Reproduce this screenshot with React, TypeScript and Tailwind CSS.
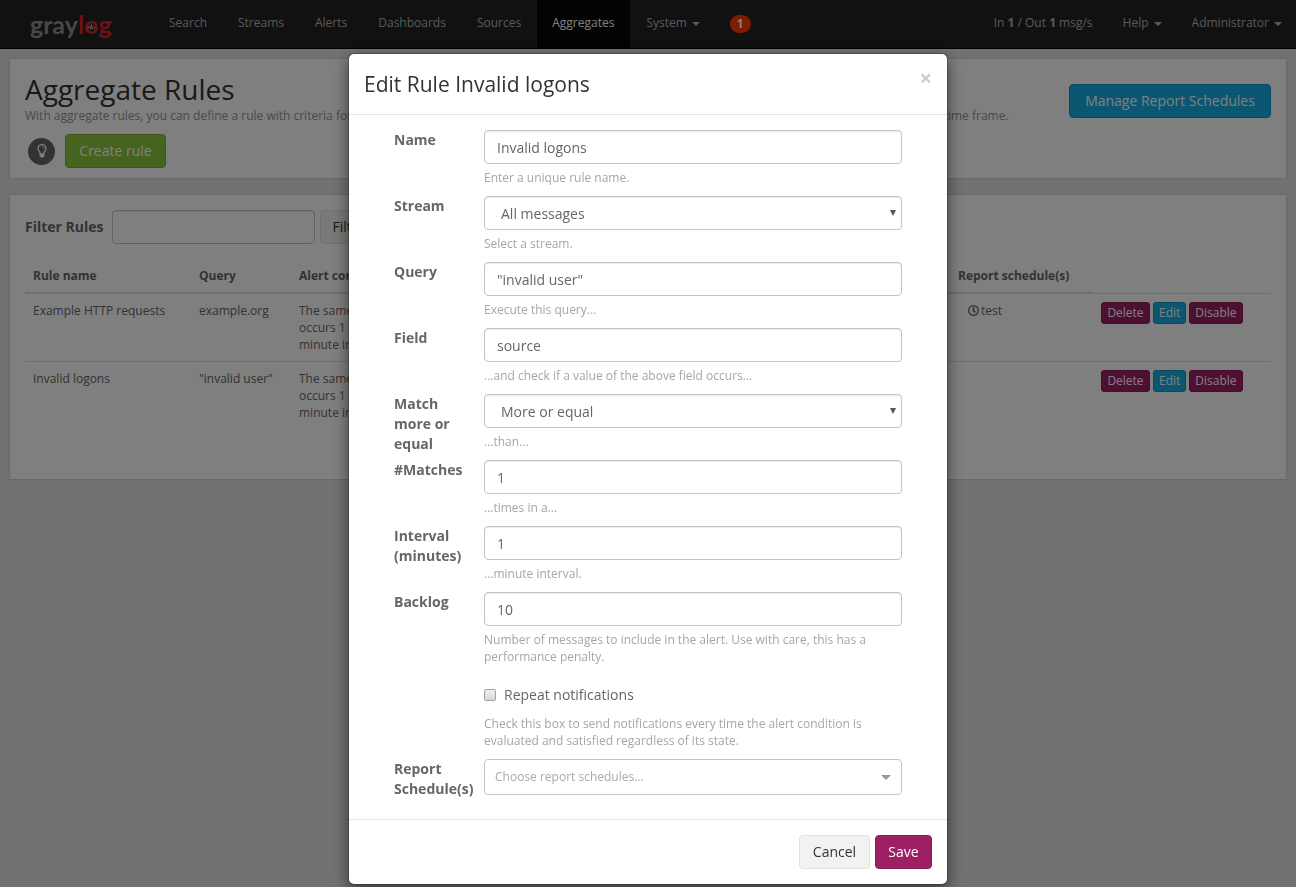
import { useState } from "react";
import type { ReactNode } from "react";
import clsx from "clsx";
import { FaRegClock } from "react-icons/fa";

const NAV_LINKS = ["Search", "Streams", "Alerts", "Dashboards", "Sources", "Aggregates"];

const RULES = [
  { name: "Example HTTP requests", query: "example.org", field: "status", schedule: "test" },
  { name: "Invalid logons", query: '"invalid user"', field: "source", schedule: "" },
];

const BUTTON_TONES = {
  primary: "border-[#8c1b58] bg-[#9e1f63] text-white",
  info: "border-[#1394c4] bg-[#16ace3] text-white",
  success: "border-[#7cb034] bg-[#8dc63f] text-white",
  default: "border-[#dfe2e2] bg-[#f1f2f2] text-[#333]",
};

const CONTROL =
  "block h-[34px] w-full rounded border border-[#c4c4c4] bg-white text-sm text-[#666] shadow-[inset_0_1px_1px_rgba(0,0,0,0.075)] outline-none";

function Caret() {
  return <span className="ml-[5px] inline-block border-x-4 border-t-4 border-x-transparent border-t-current align-middle" />;
}

type ButtonProps = {
  tone: keyof typeof BUTTON_TONES;
  small?: boolean;
  className?: string;
  onClick?: () => void;
  children: ReactNode;
};

function Button({ tone, small, className, onClick, children }: ButtonProps) {
  return (
    <button
      type="button"
      onClick={onClick}
      className={clsx(
        "whitespace-nowrap border",
        small ? "h-[22px] rounded-[3px] px-[5px] text-xs leading-[18px]" : "h-[34px] rounded px-3 text-sm leading-5",
        BUTTON_TONES[tone],
        className,
      )}
    >
      {children}
    </button>
  );
}

function Logo() {
  return (
    <a
      href="#"
      aria-label="graylog"
      className="ml-[30px] w-[124px] font-[Lato,sans-serif] text-[25px] font-bold leading-[48px] text-[#8f9194]"
    >
      gray
      <span className="text-[#d8222c]">
        l
        <span className="relative">
          o
          {/* pulse line inside the "o" */}
          <svg
            viewBox="0 0 8 8"
            className="absolute left-[3px] top-[14px] size-2"
            fill="none"
            stroke="#c9c9c9"
            strokeWidth="0.8"
          >
            <path d="M0 4.5h1.5L2.5 3l1 3.500L4.500 1.500l1 4.500.8-1.500H8" />
          </svg>
        </span>
        g
      </span>
    </a>
  );
}

function BulbIcon() {
  return (
    <svg viewBox="0 0 10 14" className="h-[14px] w-[10px]" fill="none" stroke="currentColor">
      <path d="M3.200 9.500C3.200 7.800 1 7 1 4.600a4 4 0 0 1 8 0C9 7 6.800 7.800 6.800 9.500" strokeWidth="1.300" />
      <path d="M5 2.800c1.200 0 2 .7 2 1.700" strokeWidth="0.800" />
      <path d="M2.600 9.200h4.800v3L6 13.600H4l-1.400-1.400z" fill="currentColor" stroke="none" />
    </svg>
  );
}

function Navbar() {
  return (
    <nav className="flex h-[49px] border-b border-black bg-[#222] text-xs leading-[17px] text-[#b4b4b4]">
      <Logo />
      <ul className="flex">
        {NAV_LINKS.map((label) => (
          <li key={label}>
            <a
              href="#"
              className={clsx(
                "block h-12 pl-[15px] pr-4 pt-[14px]",
                label === "Aggregates" && "bg-[#060606] text-white",
              )}
            >
              {label}
            </a>
          </li>
        ))}
        <li>
          <a href="#" className="block h-12 px-4 pt-[14px]">
            System
            <Caret />
          </a>
        </li>
        <li className="px-[14px] pt-[15px]">
          <a href="#" className="block rounded-full bg-[#ff3b00] px-[7px] font-bold leading-[18px] text-white">1</a>
        </li>
      </ul>
      <ul className="ml-auto flex pt-[14px]">
        <li className="px-[15px]">
          In <b>1</b> / Out <b>1</b> msg/s
        </li>
        <li className="px-[15px]">
          <a href="#">Help<Caret /></a>
        </li>
        <li className="pl-[15px] pr-[14px]">
          <a href="#">Administrator<Caret /></a>
        </li>
      </ul>
    </nav>
  );
}

function PageHeader() {
  return (
    <section className="flex items-start justify-between border border-[#d0d0d0] bg-white px-[15px] pb-[10px] pt-[14px]">
      <div>
        <h1 className="text-[28px] leading-8 text-[#333]">Aggregate Rules</h1>
        <p className="mt-[2px] whitespace-nowrap text-xs leading-[17px] text-[#939393]">
          With aggregate rules, you can define a rule with criteria for a field value and get an alert whenever the same value occurs more or less often than required in a given time frame.
        </p>
        <div className="mt-[10px] flex items-center gap-[10px] pl-[3px]">
          <span className="grid size-[27px] place-items-center rounded-full bg-[#666] text-white">
            <BulbIcon />
          </span>
          <Button tone="success" className="min-w-[101px]">Create rule</Button>
        </div>
      </div>
      <div className="pt-[11px]">
        <Button tone="info" className="min-w-[202px]">Manage Report Schedules</Button>
      </div>
    </section>
  );
}

function RulesTable({ onEdit }: { onEdit: () => void }) {
  return (
    <section className="border border-[#d0d0d0] bg-white px-[15px] pb-[50px] pt-[15px]">
      <form className="flex items-center">
        <label htmlFor="filter" className="mr-2 text-sm font-bold">Filter Rules</label>
        <input
          id="filter"
          className="mr-[5px] h-[34px] w-[203px] rounded border border-[#c4c4c4] px-3 text-sm shadow-[inset_0_1px_1px_rgba(0,0,0,0.075)]"
        />
        <Button tone="default">Filter</Button>
      </form>
      <table className="mt-[15px] w-full table-fixed border-collapse text-left text-xs leading-[17px]">
        <thead>
          <tr className="[&>th]:p-2">
            <th className="w-[166px] border-b-2 border-[#ddd]">Rule name</th>
            <th className="w-[100px] border-b-2 border-[#ddd]">Query</th>
            <th className="w-[200px] border-b-2 border-[#ddd]">Alert condition</th>
            <th className="border-b-2 border-[#ddd]">Stream</th>
            <th className="w-[143px] border-b-2 border-[#ddd]">Report schedule(s)</th>
            <td className="w-[178px]" />
          </tr>
        </thead>
        <tbody>
          {RULES.map((r) => (
            <tr key={r.name} className="border-t border-[#ddd] align-top [&>td]:p-2">
              <td>{r.name}</td>
              <td>{r.query}</td>
              <td>The same value of field '{r.field}' occurs 1 or more times in a 1 minute interval</td>
              <td>All messages</td>
              <td>
                {r.schedule && (
                  <span className="flex items-center gap-[2px] pl-[10px]">
                    <FaRegClock size={11} stroke="currentColor" strokeWidth={16} />
                    {r.schedule}
                  </span>
                )}
              </td>
              <td>
                <div className="flex gap-[3px]">
                  <Button tone="primary" small className="min-w-[49px]">Delete</Button>
                  <Button tone="info" small onClick={onEdit}>Edit</Button>
                  <Button tone="primary" small>Disable</Button>
                </div>
              </td>
            </tr>
          ))}
        </tbody>
      </table>
    </section>
  );
}

type FieldProps = { id: string; label: string; help?: string; children: ReactNode };

function Field({ id, label, help, children }: FieldProps) {
  return (
    <div className="flex">
      <label htmlFor={id} className="w-[90px] shrink-0 pr-[10px] text-sm font-bold leading-5">{label}</label>
      <div className="min-w-0 flex-1">
        {children}
        {help && <p className="mb-[10px] mt-[5px] text-xs leading-[17px] text-[#a6a6a6]">{help}</p>}
      </div>
    </div>
  );
}

function TextField({ id, label, help, value }: { id: string; label: string; help: string; value: string }) {
  return (
    <Field id={id} label={label} help={help}>
      <input id={id} defaultValue={value} className={clsx(CONTROL, "px-3")} />
    </Field>
  );
}

function SelectField({ id, label, help, options }: { id: string; label: string; help: string; options: string[] }) {
  return (
    <Field id={id} label={label} help={help}>
      <div className="relative">
        <select id={id} className={clsx(CONTROL, "appearance-none px-4 pt-[2px]")}>
          {options.map((o) => (
            <option key={o}>{o}</option>
          ))}
        </select>
        <span className="pointer-events-none absolute right-[6px] top-[14px] border-x-[3px] border-t-[6px] border-x-transparent border-t-[#555]" />
      </div>
    </Field>
  );
}

function EditRuleModal({ onClose }: { onClose: () => void }) {
  return (
    <div className="fixed inset-0 overflow-auto bg-black/50">
      <div
        role="dialog"
        aria-labelledby="modal-title"
        className="mx-auto mt-[53px] max-w-[600px] rounded-md border border-black/20 bg-white bg-clip-padding shadow-[0_5px_15px_rgba(0,0,0,0.5)]"
      >
        <header className="flex items-start justify-between border-b border-[#e5e5e5] p-[15px]">
          <h2 id="modal-title" className="text-[21px] leading-[30px] text-[#333]">Edit Rule Invalid logons</h2>
          <button type="button" aria-label="Close" onClick={onClose} className="text-[22px] font-bold leading-4 text-[#ccc]">
            ×
          </button>
        </header>

        <form className="px-[45px] pb-5 pt-[15px]">
          <TextField id="name" label="Name" help="Enter a unique rule name." value="Invalid logons" />
          <SelectField id="stream" label="Stream" help="Select a stream." options={["All messages"]} />
          <TextField id="query" label="Query" help="Execute this query..." value={'"invalid user"'} />
          <TextField id="field" label="Field" help="...and check if a value of the above field occurs..." value="source" />
          <SelectField id="match" label="Match more or equal" help="...than..." options={["More or equal", "Less"]} />
          <TextField id="matches" label="#Matches" help="...times in a..." value="1" />
          <TextField id="interval" label="Interval (minutes)" help="...minute interval." value="1" />
          <TextField
            id="backlog"
            label="Backlog"
            help="Number of messages to include in the alert. Use with care, this has a performance penalty."
            value="10"
          />
          <div className="pl-[90px] pt-[10px]">
            <label className="flex items-center gap-2 text-sm leading-5">
              <input
                type="checkbox"
                className="size-3 appearance-none rounded-[2px] border border-[#a3a3a3] bg-linear-to-b from-[#eee] to-[#d8d8d8]"
              />
              Repeat notifications
            </label>
            <p className="mb-[10px] mt-[10px] text-xs leading-[17px] text-[#a6a6a6]">
              Check this box to send notifications every time the alert condition is evaluated and satisfied regardless of its state.
            </p>
          </div>
          <Field id="schedules" label="Report Schedule(s)">
            <button
              id="schedules"
              type="button"
              className="flex h-9 w-full items-center justify-between rounded border border-[#c4c4c4] px-[10px] text-xs text-[#aaa]"
            >
              Choose report schedules...
              <span className="border-x-[5px] border-t-[5px] border-x-transparent border-t-[#999]" />
            </button>
          </Field>
        </form>

        <footer className="flex justify-end gap-[5px] border-t border-[#e5e5e5] p-[15px]">
          <Button tone="default" className="min-w-[71px]" onClick={onClose}>Cancel</Button>
          <Button tone="primary" className="min-w-[57px]" onClick={onClose}>Save</Button>
        </footer>
      </div>
    </div>
  );
}

export default function App() {
  const [editing, setEditing] = useState(true);

  return (
    <div className="min-h-screen bg-[#e3e3e3] font-['Open_Sans',sans-serif] text-[#666]">
      <Navbar />
      <main className="flex flex-col gap-[15px] px-[9px] pt-[9px]">
        <PageHeader />
        <RulesTable onEdit={() => setEditing(true)} />
      </main>
      {editing && <EditRuleModal onClose={() => setEditing(false)} />}
    </div>
  );
}
